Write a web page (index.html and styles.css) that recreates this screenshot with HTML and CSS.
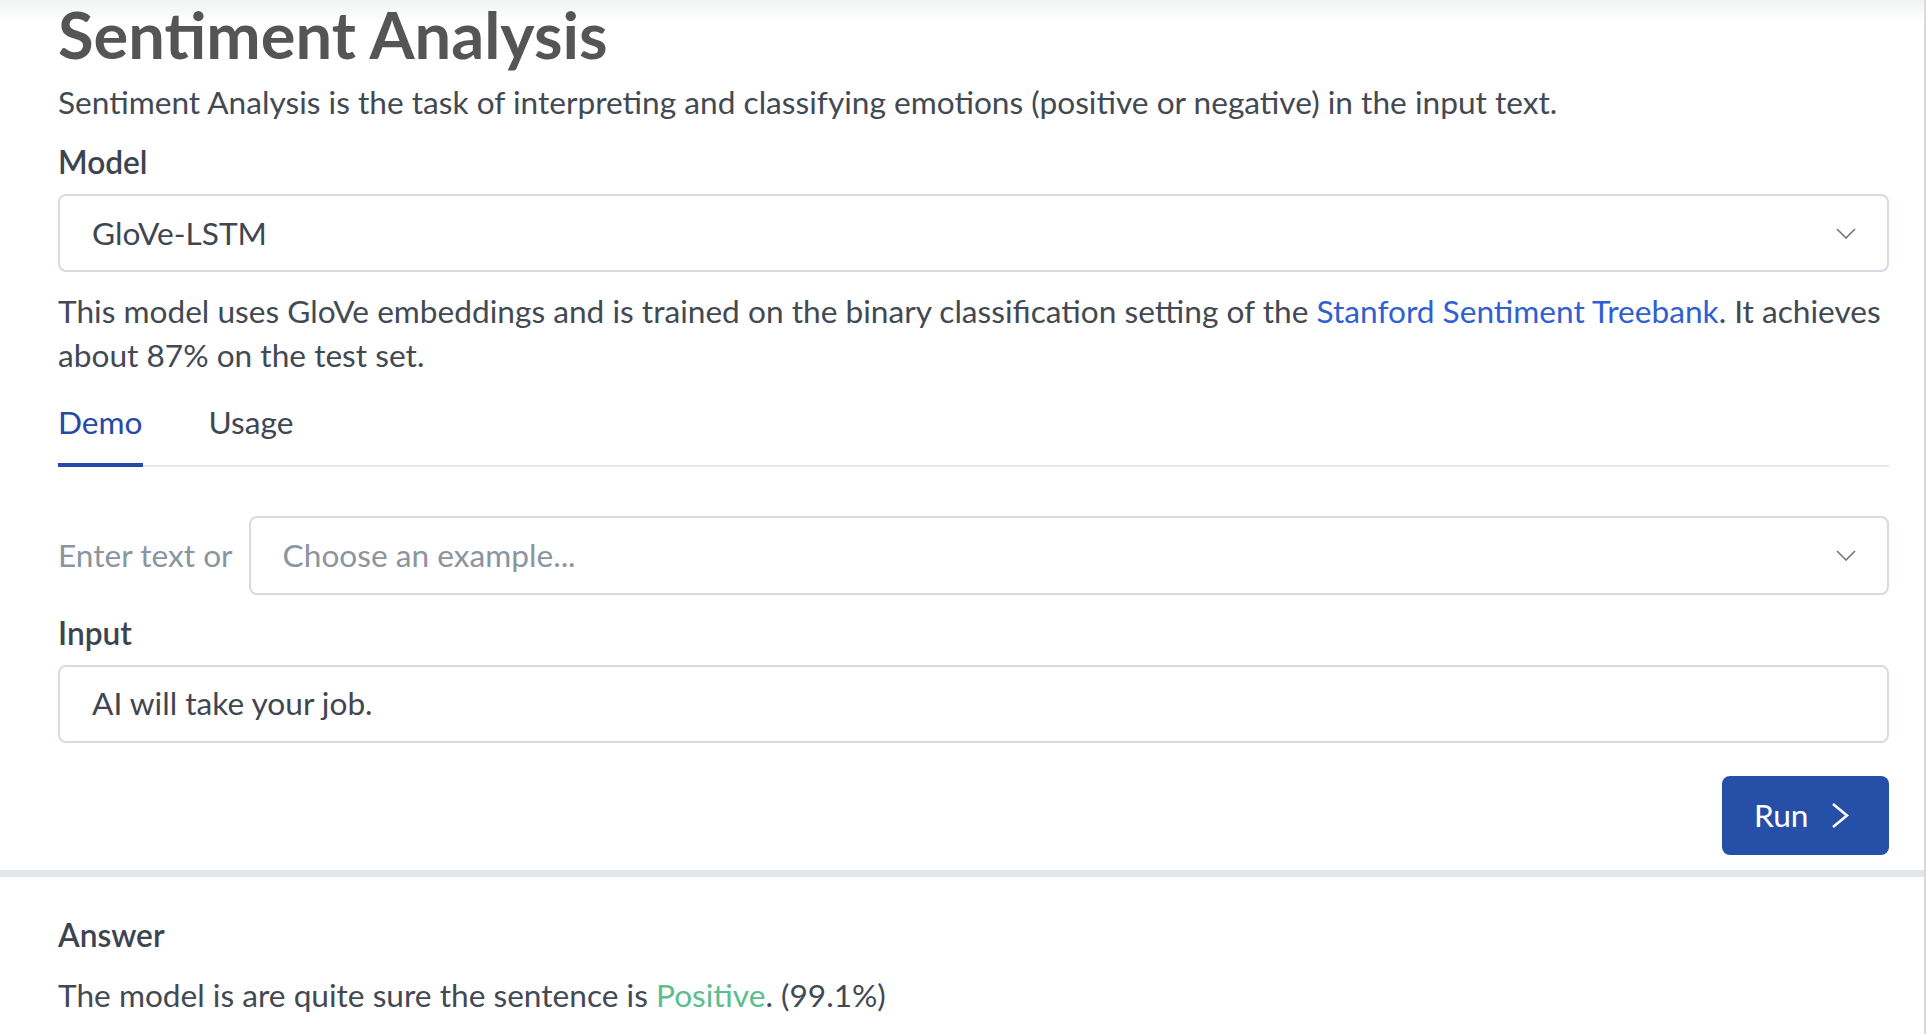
FILE: index.html
```html
<!DOCTYPE html>
<html lang="en">
<head>
<meta charset="utf-8">
<title>Sentiment Analysis</title>
<link rel="stylesheet" href="styles.css">
</head>
<body>
<div class="page">
  <section class="panel">
    <h1 class="title">Sentiment Analysis</h1>
    <p class="desc">Sentiment Analysis is the task of interpreting and classifying emotions (positive or negative) in the input text.</p>
    <div class="label">Model</div>
    <div class="select">
      <span class="select-value">GloVe-LSTM</span>
      <svg class="chev" width="20" height="11" viewBox="0 0 20 11"><polyline points="1,1 10,10 19,1" fill="none" stroke="#6f7680" stroke-width="1.6"/></svg>
    </div>
    <p class="model-desc">This model uses GloVe embeddings and is trained on the binary classification setting of the <a class="link" href="#">Stanford Sentiment Treebank</a>. It achieves about 87% on the test set.</p>
    <div class="tabs">
      <div class="tab active">Demo</div>
      <div class="tab">Usage</div>
    </div>
    <div class="example-row">
      <span class="enter">Enter text or</span>
      <div class="select grow">
        <span class="select-placeholder">Choose an example...</span>
        <svg class="chev" width="20" height="11" viewBox="0 0 20 11"><polyline points="1,1 10,10 19,1" fill="none" stroke="#6f7680" stroke-width="1.6"/></svg>
      </div>
    </div>
    <div class="label">Input</div>
    <div class="input">AI will take your job.</div>
    <div class="actions">
      <button class="run">Run
        <svg width="18" height="27" viewBox="0 0 18 27"><polyline points="2,2 16,13.5 2,25" fill="none" stroke="#ffffff" stroke-width="2.6"/></svg>
      </button>
    </div>
  </section>
  <div class="separator"></div>
  <section class="answer">
    <div class="label">Answer</div>
    <p class="sentence">The model is are quite sure the sentence is <span class="positive">Positive</span>. (99.1%)</p>
  </section>
</div>
</body>
</html>
```
FILE: styles.css
```css
html, body {
  margin: 0;
  padding: 0;
  background: #ffffff;
}
body {
  font-family: Lato, "Open Sans", "Liberation Sans", sans-serif;
  font-size: 31.65px;
  line-height: 43.2px;
  color: #424953;
  height: 1034px;
  overflow: hidden;
}
.page {
  border-right: 2px solid #d9dadb;
  min-height: 1034px;
}
.panel {
  padding: 0 35px 15px 58px;
  background: linear-gradient(#f1f2f3 0px, #ffffff 22px);
  display: flex;
  flex-direction: column;
}
.title {
  margin: 0;
  font-size: 65px;
  line-height: 68px;
  font-weight: 700;
  color: #555555;
}
.desc {
  margin: 13px 0 0 0;
}
.label {
  font-weight: 600;
  color: #3c444f;
  margin-top: 17px;
}
.select {
  margin-top: 10px;
  height: 78px;
  box-sizing: border-box;
  border: 2px solid #d6dae2;
  border-radius: 8px;
  display: flex;
  align-items: center;
  justify-content: space-between;
  padding: 0 31px 0 32px;
}
.select-value {
  color: #3f4651;
}
.select-placeholder {
  color: #8c94a0;
}
.chev {
  display: block;
}
.model-desc {
  margin: 17px 0 0 0;
  line-height: 44px;
}
.link {
  color: #2f5fd1;
  text-decoration: none;
}
.tabs {
  margin-top: 24px;
  display: flex;
  gap: 66px;
  border-bottom: 2px solid #e5e7eb;
}
.tab {
  padding-bottom: 18px;
  margin-bottom: -2px;
  border-bottom: 4px solid transparent;
  color: #3f4651;
}
.tab.active {
  color: #2549a9;
  border-bottom-color: #2549a9;
}
.example-row {
  margin-top: 49px;
  display: flex;
  align-items: center;
  gap: 16px;
}
.enter {
  color: #8c94a0;
  white-space: nowrap;
}
.example-row .select {
  margin-top: 0;
  height: 79px;
  flex: 1;
}
.input {
  margin-top: 10px;
  height: 78px;
  box-sizing: border-box;
  border: 2px solid #d6dae2;
  border-radius: 8px;
  display: flex;
  align-items: center;
  padding: 0 32px;
  color: #3f4651;
}
.actions {
  margin-top: 33px;
  display: flex;
  justify-content: flex-end;
}
.run {
  height: 79px;
  width: 167px;
  box-sizing: border-box;
  border: none;
  border-radius: 8px;
  background: #2650a7;
  color: #ffffff;
  font-family: Lato, "Open Sans", "Liberation Sans", sans-serif;
  font-size: 31.65px;
  display: flex;
  align-items: center;
  gap: 23px;
  padding: 0 0 0 32px;
}
.run svg {
  display: block;
}
.separator {
  height: 7px;
  background: #e2e5ea;
}
.answer {
  padding: 20px 35px 0 58px;
  display: flex;
  flex-direction: column;
}
.sentence {
  margin: 17px 0 0 0;
}
.positive {
  color: #5cbd8e;
}
```
